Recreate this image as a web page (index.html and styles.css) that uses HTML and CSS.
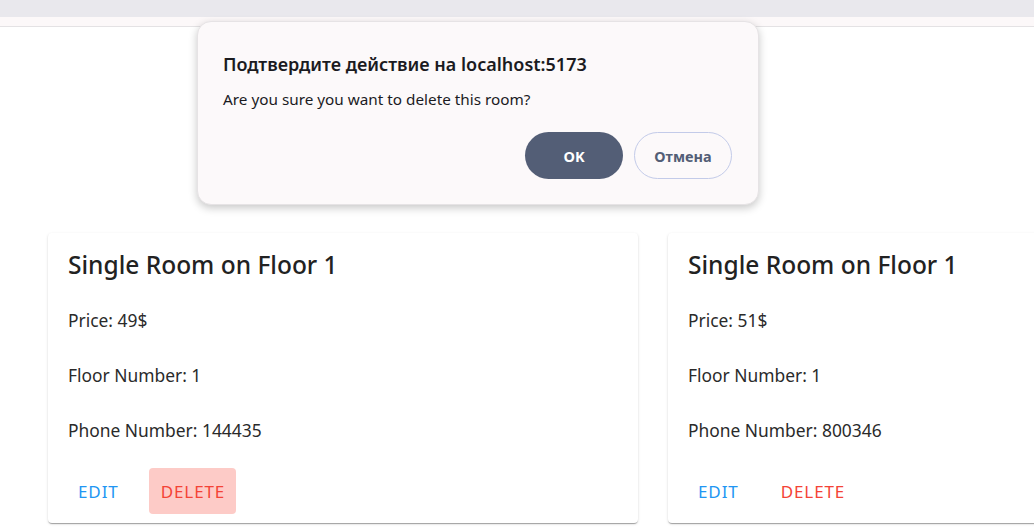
FILE: index.html
```html
<!DOCTYPE html>
<html lang="en">
<head>
<meta charset="utf-8">
<title>Rooms</title>
<link rel="stylesheet" href="styles.css">
</head>
<body>
<div class="topbar"></div>
<div class="subbar"></div>
<main class="rooms">
  <section class="card">
    <h2 class="card-title">Single Room on Floor 1</h2>
    <p class="card-line">Price: 49$</p>
    <p class="card-line">Floor Number: 1</p>
    <p class="card-line">Phone Number: 144435</p>
    <div class="actions">
      <button class="btn btn-edit">EDIT</button>
      <button class="btn btn-delete active">DELETE</button>
    </div>
  </section>
  <section class="card">
    <h2 class="card-title">Single Room on Floor 1</h2>
    <p class="card-line">Price: 51$</p>
    <p class="card-line">Floor Number: 1</p>
    <p class="card-line">Phone Number: 800346</p>
    <div class="actions">
      <button class="btn btn-edit">EDIT</button>
      <button class="btn btn-delete">DELETE</button>
    </div>
  </section>
</main>
<div class="dialog">
  <h1 class="dialog-title">Подтвердите действие на localhost:5173</h1>
  <p class="dialog-msg">Are you sure you want to delete this room?</p>
  <div class="dialog-actions">
    <button class="dbtn dbtn-ok">OK</button>
    <button class="dbtn dbtn-cancel">Отмена</button>
  </div>
</div>
</body>
</html>
```
FILE: styles.css
```css
* { box-sizing: border-box; }
html, body { margin: 0; padding: 0; background: #ffffff; }
body {
  font-family: "Noto Sans", "Open Sans", sans-serif;
  width: 1034px;
  height: 532px;
  overflow: hidden;
  position: relative;
}
.topbar { height: 17px; background: #e9e8ed; }
.subbar { height: 10px; background: #fcf8f9; border-bottom: 1px solid #e4e2e4; }

.rooms {
  display: flex;
  gap: 30px;
  padding: 206px 0 10px 48px;
  overflow: hidden;
}
.card {
  flex: 0 0 590px;
  height: 290px;
  background: #fff;
  border-radius: 4px;
  box-shadow: 0 2px 1px -1px rgba(0,0,0,0.2), 0 1px 1px 0 rgba(0,0,0,0.14), 0 1px 3px 0 rgba(0,0,0,0.12);
  padding: 16px 20px 0 20px;
  color: #2a2a2a;
}
.card-title {
  margin: 0;
  font-size: 24.5px;
  font-weight: 500;
  line-height: 32px;
  color: #222;
}
.card-line {
  margin: 23px 0 0 0;
  font-size: 17.4px;
  line-height: 32px;
}
.card-line + .card-line { margin-top: 23px; }
.actions {
  display: flex;
  gap: 20px;
  margin-top: 22px;
}
.btn {
  font-family: "Noto Sans", sans-serif;
  border: 0;
  background: transparent;
  font-size: 17px;
  letter-spacing: 0.9px;
  height: 46px;
  padding: 0 10px;
  border-radius: 4px;
  cursor: pointer;
}
.btn-edit { color: #2196f3; }
.btn-delete { color: #f44336; padding: 0 11px 0 12px; }
.btn-delete.active { background: #fdcbc7; }

.dialog {
  position: absolute;
  left: 197px;
  top: 21px;
  width: 562px;
  height: 184px;
  background: #fcf9fa;
  border: 1px solid #e6e3e5;
  border-radius: 14px;
  box-shadow: 0 3px 8px rgba(0,0,0,0.22);
  padding: 29px 26px 0 25px;
  color: #1b1b1f;
}
.dialog-title {
  margin: 0;
  font-size: 18px;
  font-weight: 600;
  line-height: 26px;
}
.dialog-msg {
  margin: 12px 0 0 0;
  font-size: 15.3px;
  line-height: 20px;
}
.dialog-actions {
  display: flex;
  justify-content: flex-end;
  gap: 11px;
  margin-top: 23px;
}
.dbtn {
  width: 98px;
  height: 47px;
  border-radius: 24px;
  font-family: "Noto Sans", sans-serif;
  font-size: 14.5px;
  font-weight: 700;
}
.dbtn-ok { background: #535e76; color: #fff; border: 0; }
.dbtn-cancel { background: transparent; color: #535e76; border: 1px solid #c3cbe9; }
```
